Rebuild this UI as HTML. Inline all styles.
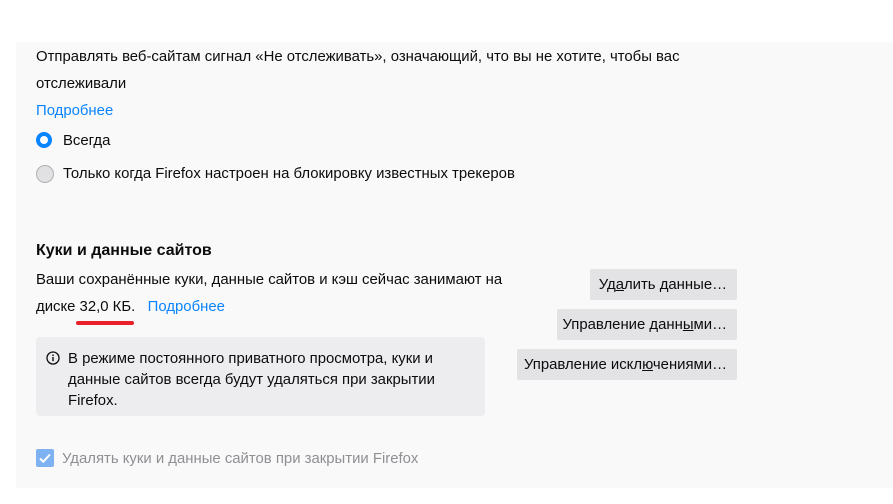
<!DOCTYPE html>
<html><head><meta charset="utf-8"><style>
body{margin:0;width:893px;height:504px;background:#fff;font-family:"Liberation Sans","DejaVu Sans",sans-serif;font-size:14.9px;color:#0c0c0d;position:relative;overflow:hidden}
.panel{position:absolute;left:16px;top:42px;right:0;height:446px;background:#f9f9fa}
.t{position:absolute;white-space:nowrap}
a{color:#0a84ff;text-decoration:none}
.btn{position:absolute;background:#e3e3e5;border-radius:2px;height:31px;line-height:33px;text-align:right;padding-right:10px;box-sizing:border-box;right:156px}
u{text-decoration:underline}
</style></head><body>
<div class="panel"></div>
<div class="t" style="left:36px;top:49px">Отправлять веб-сайтам сигнал «Не отслеживать», означающий, что вы не хотите, чтобы вас</div>
<div class="t" style="left:36px;top:76px">отслеживали</div>
<div class="t" style="left:36px;top:103px"><a>Подробнее</a></div>
<div style="position:absolute;left:36px;top:132px;width:8px;height:8px;border:4px solid #0a84ff;border-radius:50%;background:#fff"></div>
<div class="t" style="left:63px;top:133px">Всегда</div>
<div style="position:absolute;left:36px;top:165px;width:16px;height:16px;border:1px solid #b1b1b3;border-radius:50%;background:#e1e1e3"></div>
<div class="t" style="left:63px;top:166px">Только когда Firefox настроен на блокировку известных трекеров</div>
<div class="t" style="left:36px;top:242px;font-weight:bold;font-size:16px">Куки и данные сайтов</div>
<div class="t" style="left:36px;top:272px">Ваши сохранённые куки, данные сайтов и кэш сейчас занимают на</div>
<div class="t" style="left:36px;top:299px">диске 32,0 КБ. &nbsp;&nbsp;<a>Подробнее</a></div>
<div style="position:absolute;left:76px;top:321px;width:58px;height:4px;background:#e8202a;border-radius:2px"></div>
<div class="btn" style="top:269px;width:147px">Уд<u>а</u>лить данные…</div>
<div class="btn" style="top:309px;width:180px">Управление данн<u>ы</u>ми…</div>
<div class="btn" style="top:349px;width:220px">Управление искл<u>ю</u>чениями…</div>
<div style="position:absolute;left:36px;top:337px;width:449px;height:79px;background:#ededf0;border-radius:4px"></div>
<svg style="position:absolute;left:46px;top:351px" width="14" height="14" viewBox="0 0 14 14"><circle cx="7" cy="7" r="6" fill="none" stroke="#0c0c0d" stroke-width="1.3"/><rect x="6.3" y="6" width="1.4" height="4.2" fill="#0c0c0d"/><circle cx="7" cy="4.2" r=".85" fill="#0c0c0d"/></svg>
<div class="t" style="left:68px;top:349px;line-height:21px">В режиме постоянного приватного просмотра, куки и<br>данные сайтов всегда будут удаляться при закрытии<br>Firefox.</div>
<div style="position:absolute;left:36px;top:449px;width:18px;height:18px;background:#7fb2f3;border-radius:2px"></div>
<svg style="position:absolute;left:36px;top:449px" width="18" height="18"><path d="M4 9.5l3.3 3.2L14 5.5" fill="none" stroke="#fff" stroke-width="2"/></svg>
<div class="t" style="left:62px;top:451px;color:#8f8f94">Удалять куки и данные сайтов при закрытии Firefox</div>
</body></html>
